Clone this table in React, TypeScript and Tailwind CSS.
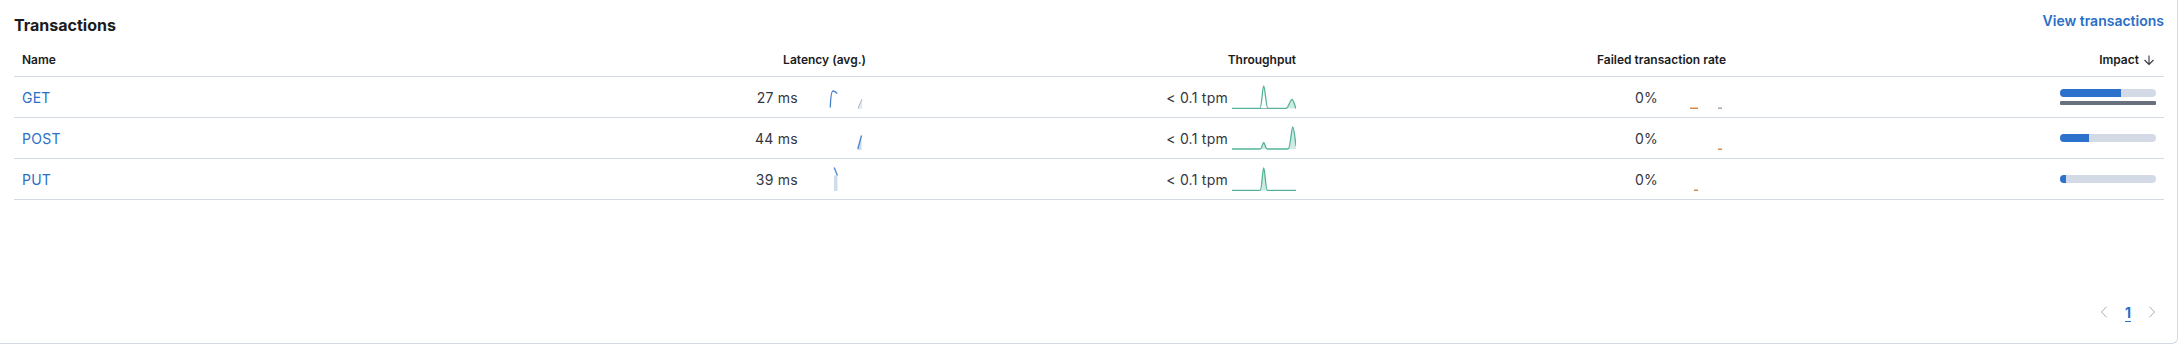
import React from "react";

type Row = {
  name: string;
  latency: string;
  impact: number;
  compare?: boolean;
};

const rows: Row[] = [
  { name: "GET", latency: "27 ms", impact: 64, compare: true },
  { name: "POST", latency: "44 ms", impact: 30 },
  { name: "PUT", latency: "39 ms", impact: 6 },
];

const GREEN = "#54b399";
const GREEN_FILL = "rgba(84,179,153,0.28)";
const BLUE = "#4a83c9";
const BLUE_FILL = "#cfdcee";
const ORANGE = "#da8b45";

function LatencySpark({ i }: { i: number }) {
  return (
    <svg width="64" height="24" viewBox="0 0 64 24" className="shrink-0">
      {i === 0 && (
        <>
          <path d="M28.3 22.5 C28.6 14 29.4 6 31 6 C32.8 6 34 7 35.2 8.5" fill="none" stroke={BLUE} strokeWidth="1.3" />
          <path d="M56 24 L60 14 L60 24 Z" fill="#e3eaf4" />
          <path d="M56 23.5 L60 14" fill="none" stroke="#aab6c8" strokeWidth="1" />
        </>
      )}
      {i === 1 && (
        <>
          <path d="M55.6 24 L59.5 9.5 L59.5 24 Z" fill={BLUE_FILL} />
          <path d="M55.8 23 L59.5 9.5" fill="none" stroke={BLUE} strokeWidth="1.3" />
        </>
      )}
      {i === 2 && (
        <>
          <rect x="32" y="8.5" width="3.5" height="15.5" fill={BLUE_FILL} />
          <path d="M32.2 0.5 L35.4 8.5" fill="none" stroke={BLUE} strokeWidth="1.3" />
        </>
      )}
    </svg>
  );
}

function ThroughputSpark({ i }: { i: number }) {
  return (
    <svg width="64" height="24" viewBox="0 0 64 24" className="shrink-0">
      {i === 0 && (
        <>
          <path d="M54 23.5 C56 23.5 58.5 14.3 60 14.3 C61.5 14.3 62.5 20 64 23.5 Z" fill={GREEN_FILL} />
          <path d="M28 23.5 L36 23.5" stroke="#a0a5ae" strokeWidth="1" />
          <path
            d="M0 23.5 L28 23.5 C29.6 23.5 30.5 1 31.7 1 C33 1 34 23.5 36 23.5 L54 23.5 C56 23.5 58.5 14.3 60 14.3 C61.5 14.3 62.5 20 64 23.5"
            fill="none"
            stroke={GREEN}
            strokeWidth="1.3"
          />
        </>
      )}
      {i === 1 && (
        <>
          <path d="M28 23 C30 23 30.7 16.5 31.7 16.5 C32.7 16.5 33.5 23 35.5 23 Z" fill={GREEN_FILL} />
          <path d="M56 23 C58.5 23 59.5 0.8 60.7 0.8 C62 0.8 63 12 64 20 L64 23 Z" fill={GREEN_FILL} />
          <path
            d="M0 23 L28 23 C30 23 30.7 16.5 31.7 16.5 C32.7 16.5 33.5 23 35.5 23 L56 23 C58.5 23 59.5 0.8 60.7 0.8 C62 0.8 63 12 64 20"
            fill="none"
            stroke={GREEN}
            strokeWidth="1.3"
          />
        </>
      )}
      {i === 2 && (
        <>
          <path d="M28 23.5 C30 23.5 30.5 0.8 31.7 0.8 C33 0.8 33.5 23.5 35.5 23.5 Z" fill={GREEN_FILL} />
          <path
            d="M0 23.5 L28 23.5 C30 23.5 30.5 0.8 31.7 0.8 C33 0.8 33.5 23.5 35.5 23.5 L64 23.5"
            fill="none"
            stroke={GREEN}
            strokeWidth="1.3"
          />
        </>
      )}
    </svg>
  );
}

function FailedSpark({ i }: { i: number }) {
  return (
    <svg width="64" height="24" viewBox="0 0 64 24" className="shrink-0">
      {i === 0 && (
        <>
          <rect x="28" y="22.5" width="8" height="1.5" fill={ORANGE} />
          <rect x="56" y="22.5" width="4" height="1.5" fill="#a0a5ae" />
        </>
      )}
      {i === 1 && <rect x="56" y="22.5" width="4" height="1.5" fill={ORANGE} />}
      {i === 2 && <rect x="32" y="22.5" width="4" height="1.5" fill={ORANGE} />}
    </svg>
  );
}

function Chevron({ dir }: { dir: "left" | "right" }) {
  return (
    <svg width="8" height="12" viewBox="0 0 8 12">
      <path
        d={dir === "left" ? "M6.5 0.8 L1.5 6 L6.5 11.2" : "M1.5 0.8 L6.5 6 L1.5 11.2"}
        fill="none"
        stroke="#a2abba"
        strokeWidth="1"
      />
    </svg>
  );
}

export default function App() {
  return (
    <div className="bg-white w-[2181px] h-[349px] font-['Inter','Noto_Sans',sans-serif]">
      <div className="w-[2178px] h-[344px] flex flex-col border-r border-b border-[#d3dae6] rounded-br-[6px] pl-[14px] pr-[13px] pt-[13px] pb-[19px]">
        <div className="flex justify-between items-start h-[24px]">
          <h2 className="text-[16px] leading-[24px] font-bold text-[#1a1c21]">Transactions</h2>
          <a className="text-[14px] leading-[20px] font-semibold text-[#2a6ec6] -mt-[2px]">
            View transactions
          </a>
        </div>

        <div className="mt-[7px] w-[2150px]">
          <div className="grid grid-cols-5 h-[33px] border-b border-[#d3dae6] text-[12px] font-semibold text-[#1a1c21]">
            <div className="px-2 flex items-center">Name</div>
            <div className="px-2 flex items-center justify-end">Latency (avg.)</div>
            <div className="px-2 flex items-center justify-end">Throughput</div>
            <div className="px-2 flex items-center justify-end">Failed transaction rate</div>
            <div className="px-2 flex items-center justify-end gap-[3px]">
              Impact
              <svg width="14" height="12" viewBox="0 0 14 12">
                <path d="M7 1.5 V10.5 M2.5 6 L7 10.5 L11.5 6" fill="none" stroke="#343741" strokeWidth="1.1" />
              </svg>
            </div>
          </div>

          {rows.map((r, i) => (
            <div
              key={r.name}
              className="grid grid-cols-5 h-[41px] border-b border-[#d3dae6] text-[14px] tracking-[0.25px] text-[#343741]"
            >
              <div className="px-2 flex items-center">
                <a className="text-[#2a6ec6]">{r.name}</a>
              </div>
              <div className="px-2 flex items-center justify-end gap-[4px]">
                <span>{r.latency}</span>
                <LatencySpark i={i} />
              </div>
              <div className="px-2 flex items-center justify-end gap-[4px]">
                <span>&lt; 0.1 tpm</span>
                <ThroughputSpark i={i} />
              </div>
              <div className="px-2 flex items-center justify-end gap-[4px]">
                <span>0%</span>
                <FailedSpark i={i} />
              </div>
              <div className="px-2 flex items-center justify-end">
                <div className="w-[96px] flex flex-col gap-[4px]">
                  <div className="h-[8px] rounded-full bg-[#d3dae6] overflow-hidden">
                    <div className="h-full bg-[#2c72cd]" style={{ width: `${r.impact}%` }} />
                  </div>
                  {r.compare && <div className="h-[4px] rounded-[1px] bg-[#69707d]" />}
                </div>
              </div>
            </div>
          ))}
        </div>

        <div className="mt-auto w-[2150px] flex justify-end items-center h-[24px]">
          <div className="w-[24px] flex justify-center">
            <Chevron dir="left" />
          </div>
          <div className="w-[24px] flex justify-center text-[14px] font-bold text-[#2a6ec6] underline underline-offset-[3px]">
            1
          </div>
          <div className="w-[24px] flex justify-center">
            <Chevron dir="right" />
          </div>
        </div>
      </div>
    </div>
  );
}
